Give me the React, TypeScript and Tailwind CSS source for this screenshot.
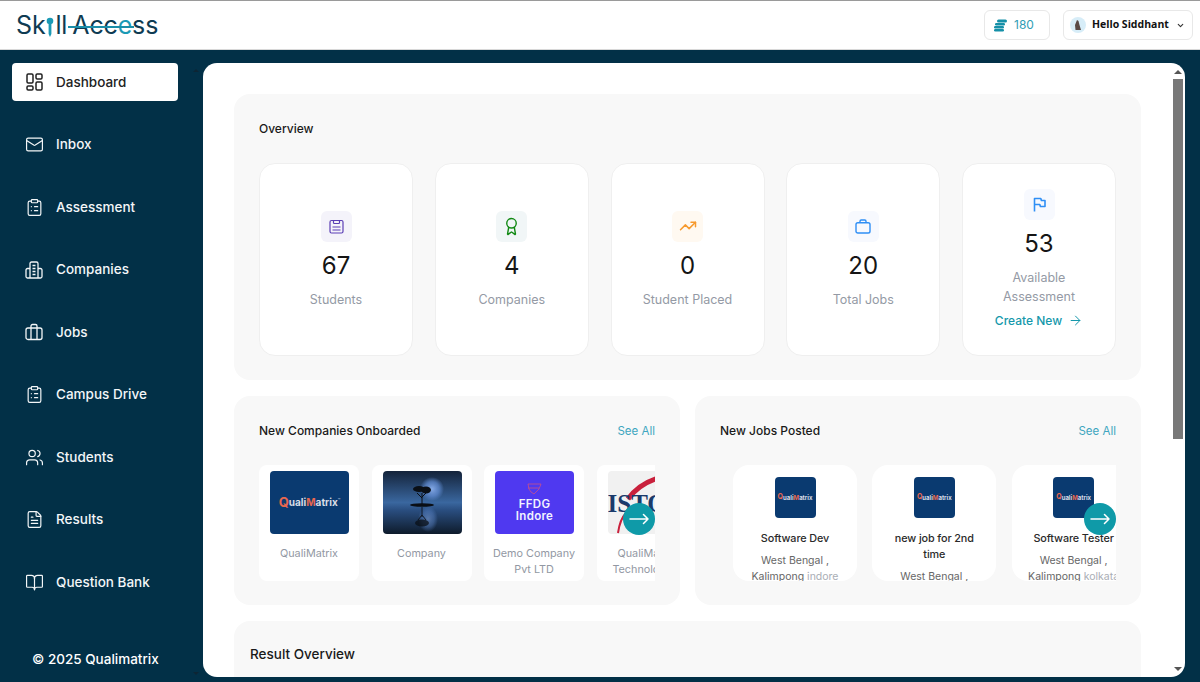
import { ArrowRight, Award, BookOpen, ChevronDown, ClipboardList, Mail, TrendingUp, Users, FileText } from "lucide-react";
import type { ReactNode } from "react";

const DashboardIcon = () => (
    <svg width="17" height="18" viewBox="0 0 17 18" fill="none" stroke="currentColor" strokeWidth="1.5">
        <rect x="1" y="1" width="6" height="9" rx="1.2" />
        <rect x="10" y="1" width="6" height="5" rx="1.2" />
        <rect x="1" y="13" width="6" height="4" rx="1.2" />
        <rect x="10" y="9" width="6" height="8" rx="1.2" />
    </svg>
);

const CompaniesIcon = () => (
    <svg width="18" height="18" viewBox="0 0 18 18" fill="none" stroke="currentColor" strokeWidth="1.3" strokeLinejoin="round">
        <path d="M5 17V2.5A1.5 1.5 0 0 1 6.5 1h5A1.5 1.5 0 0 1 13 2.5V17" />
        <path d="M5 7.5H2.5A1.5 1.5 0 0 0 1 9v6.5A1.5 1.5 0 0 0 2.5 17h13a1.5 1.5 0 0 0 1.5-1.5V9a1.5 1.5 0 0 0-1.5-1.5H13" />
        <path d="M7.5 4.5h3M7.5 7.5h3M7.5 10.5h3M7.5 13.5h3" />
    </svg>
);

const JobsIcon = () => (
    <svg width="18" height="18" viewBox="0 0 18 18" fill="none" stroke="currentColor" strokeWidth="1.3" strokeLinejoin="round">
        <rect x="1" y="5" width="16" height="11.5" rx="2" />
        <path d="M6 16.5V3a1.5 1.5 0 0 1 1.5-1.5h3A1.5 1.5 0 0 1 12 3v13.5" />
    </svg>
);

const StudentsClipIcon = () => (
    <svg width="15" height="15" viewBox="0 0 15 15" fill="none" stroke="#5b3fb5" strokeWidth="1.2">
        <rect x="1" y="1.5" width="13" height="12.5" rx="1.5" />
        <path d="M4.5 1.5v2.2a.8.8 0 0 0 .8.8h4.4a.8.8 0 0 0 .8-.8V1.5M3.5 8h8M3.5 11h8" />
    </svg>
);

const BriefcaseIcon = () => (
    <svg width="16" height="15" viewBox="0 0 16 15" fill="none" stroke="#2f8ff5" strokeWidth="1.4">
        <rect x="1" y="3.7" width="14" height="10.3" rx="1.8" />
        <path d="M5 3.7V2.2A1.2 1.2 0 0 1 6.2 1h3.6A1.2 1.2 0 0 1 11 2.2v1.5" />
    </svg>
);

const FlagIcon = () => (
    <svg width="13" height="15" viewBox="0 0 13 15" fill="none" stroke="#2f8ff5" strokeWidth="1.6" strokeLinejoin="round">
        <path d="M1.5 14.5V1.5h6.3l.6 2h3.6v6H7.4l-.6-2H1.5" />
    </svg>
);

const CoinsIcon = () => (
    <svg width="13" height="13" viewBox="0 0 13 13" fill="#1590a8">
        <rect x="3" y="0.5" width="10" height="3" rx="1.5" />
        <rect x="1" y="4" width="10" height="2.4" rx="1.2" />
        <rect x="0" y="7" width="10" height="2.4" rx="1.2" />
        <rect x="0" y="10" width="10" height="2.6" rx="1.3" />
    </svg>
);

const LongArrow = () => (
    <svg width="20" height="14" viewBox="0 0 20 14" fill="none" stroke="currentColor" strokeWidth="1.5" strokeLinecap="round" strokeLinejoin="round">
        <path d="M1 7h18M14.5 2.5 19 7l-4.5 4.5" />
    </svg>
);

const navItems: { label: string; icon: ReactNode }[] = [
    { label: "Dashboard", icon: <DashboardIcon /> },
    { label: "Inbox", icon: <Mail size={19} strokeWidth={1.5} /> },
    { label: "Assessment", icon: <ClipboardList size={19} strokeWidth={1.5} /> },
    { label: "Companies", icon: <CompaniesIcon /> },
    { label: "Jobs", icon: <JobsIcon /> },
    { label: "Campus Drive", icon: <ClipboardList size={19} strokeWidth={1.5} /> },
    { label: "Students", icon: <Users size={19} strokeWidth={1.5} /> },
    { label: "Results", icon: <FileText size={19} strokeWidth={1.5} /> },
    { label: "Question Bank", icon: <BookOpen size={19} strokeWidth={1.5} /> },
];

const Logo = () => (
    <div className="flex items-baseline text-[25px] leading-none tracking-[-0.15px] text-[#0e3b52]">
        <span>Sk</span>
        <svg width="8" height="21" viewBox="0 0 8 21" className="mx-[1px] self-end">
            <circle cx="4" cy="4" r="3.3" fill="#1b9ab5" />
            <path d="M2.6 7h2.8v10l-1.4 3-1.4-3z" fill="#1b9ab5" />
        </svg>
        <span>ll</span>
        <span className="relative ml-[5px]">
            Acc<span className="text-[#1b9ab5]">e</span>ss
            <span className="absolute left-[-4px] top-[13px] h-[2px] w-[66px] bg-[#1b8ea8]" />
        </span>
    </div>
);

const Header = () => (
    <header className="flex h-[50px] shrink-0 items-center justify-between border-t border-b border-t-[#9a9a9a] border-b-[#d8d8d8] bg-white pl-4 pr-[7px]">
        <Logo />
        <div className="flex items-center gap-[13px]">
            <div className="flex h-[30px] w-[66px] items-center gap-[7px] rounded-md border border-[#e8e8e8] pl-[9px] text-xs text-[#2f9db5]">
                <CoinsIcon />
                180
            </div>
            <div className="flex h-[30px] w-[130px] items-center whitespace-nowrap rounded-md border border-[#e8e8e8] pl-[6px] font-['Open_Sans',sans-serif] text-[10.5px] font-bold text-[#111]">
                <svg width="16" height="16" viewBox="0 0 16 16" className="mr-[6px] shrink-0">
                    <circle cx="8" cy="8" r="8" fill="#d7edf8" />
                    <path d="M5.5 13 5 8l2-5 1.5 1 1 4 1.5 5z" fill="#5a4a45" />
                </svg>
                Hello Siddhant
                <ChevronDown size={9} strokeWidth={3} className="ml-[7px] shrink-0 text-[#333]" />
            </div>
        </div>
    </header>
);

const Sidebar = () => (
    <aside className="relative flex w-[203px] shrink-0 flex-col justify-between pl-3 pt-[13px] pb-[13px] text-white">
        <nav className="flex w-[166px] flex-col gap-[24.5px]">
            {navItems.map((item, i) => (
                <div
                    key={item.label}
                    className={`flex h-[38px] items-center rounded pl-[13px] text-[13.5px] font-medium ${i === 0 ? "bg-white text-[#222]" : "text-[#f3f6f8]"}`}
                >
                    <span className={`flex w-[31px] shrink-0 items-center ${i === 0 ? "pl-[1px]" : ""}`}>{item.icon}</span>
                    {item.label}
                </div>
            ))}
        </nav>
        <div className="pl-5 text-[13.5px] font-medium">© 2025 Qualimatrix</div>
        <div className="absolute right-[4px] top-[19px] h-0 w-0 border-x-[3px] border-b-[3px] border-x-transparent border-b-[#0d2534]" />
        <div className="absolute bottom-[7px] right-[4px] h-0 w-0 border-x-[3px] border-t-[3px] border-x-transparent border-t-[#0d2534]" />
    </aside>
);

const StatCard = ({ tile, icon, value, label, extra }: { tile: string; icon: ReactNode; value: string; label: ReactNode; extra?: ReactNode }) => (
    <div className="flex h-[193px] flex-col items-center justify-center rounded-2xl border border-[#efefef] bg-white text-center">
        <div className={`flex h-[31px] w-[31px] items-center justify-center rounded-md ${tile}`}>{icon}</div>
        <div className="mt-[6px] text-2xl leading-[36px] text-[#151515]">{value}</div>
        <div className="mt-[6px] text-[12.5px] leading-[19px] text-[#949aa5]">{label}</div>
        {extra}
    </div>
);

const CarouselArrow = () => (
    <div className="absolute right-0 top-[38px] flex h-8 w-8 items-center justify-center rounded-full bg-[#0f9aa8] text-white">
        <LongArrow />
    </div>
);

const QualiLogo = ({ big }: { big?: boolean }) => (
    <div className={`flex h-full w-full items-center justify-center rounded bg-[#0a3a70] font-bold ${big ? "text-[10px]" : "text-[6px]"}`}>
        <span className={`text-[#e8674f] ${big ? "text-[13px]" : "text-[7px]"}`}>Q</span>
        <span className="text-[#d8dde6]">uali</span>
        <span className="text-[#e8674f]">M</span>
        <span className="text-[#d8dde6]">atrix</span>
        {big && <span className="mb-[4px] text-[4px] text-[#d8dde6]">™</span>}
    </div>
);

const NightImage = () => (
    <svg viewBox="0 0 79 63" className="h-full w-full rounded">
        <defs>
            <linearGradient id="sky" x1="0" y1="0" x2="0" y2="1">
                <stop offset="0" stopColor="#14233a" />
                <stop offset="0.5" stopColor="#3a679f" />
                <stop offset="0.62" stopColor="#2a4e80" />
                <stop offset="1" stopColor="#0e1b2b" />
            </linearGradient>
            <radialGradient id="moon" cx="0.5" cy="0.5" r="0.5">
                <stop offset="0" stopColor="#86aae6" />
                <stop offset="0.6" stopColor="#5f8ad0" stopOpacity="0.75" />
                <stop offset="1" stopColor="#5f8ad0" stopOpacity="0" />
            </radialGradient>
        </defs>
        <rect width="79" height="63" fill="url(#sky)" />
        <circle cx="49" cy="18" r="12" fill="url(#moon)" />
        <ellipse cx="45" cy="48" rx="10" ry="13" fill="url(#moon)" opacity="0.55" />
        <ellipse cx="39" cy="34" rx="12" ry="1.8" fill="#0a0f16" />
        <path d="M39 33V22M39 27l-5-5M39 26l5-5" stroke="#0a0f16" strokeWidth="1" />
        <ellipse cx="36" cy="18" rx="6" ry="3" fill="#0a0f16" />
        <ellipse cx="43" cy="19" rx="5" ry="3.5" fill="#0a0f16" />
        <path d="M39 36v10M39 44l-4 5M39 44l4 5" stroke="#0a0f16" strokeWidth="1" opacity="0.85" />
        <ellipse cx="39" cy="52" rx="7" ry="3.5" fill="#0a0f16" opacity="0.75" />
    </svg>
);

const FfdgImage = () => (
    <div className="flex h-full w-full flex-col items-center justify-center rounded bg-[#4f39f0] text-[11.5px] font-semibold leading-[12px] tracking-[0.3px] text-[#f2f2ff]">
        <svg width="15" height="12" viewBox="0 0 15 12" fill="none" stroke="#d8547a" strokeWidth="0.7" className="mb-[3px]">
            <path d="M1 1h13l-2 5-5 5-3-2-2-3zM1 5h11" />
        </svg>
        <span>FFDG</span>
        <span>Indore</span>
    </div>
);

const IstoImage = () => (
    <div className="relative h-full w-full overflow-hidden rounded bg-[#f1f1f1]">
        <svg viewBox="0 0 79 63" className="h-full w-full">
            <path d="M20 28Q34 9 60 5" stroke="#c9203c" strokeWidth="5" fill="none" />
            <path d="M10 62Q12 48 18 42" stroke="#c9203c" strokeWidth="2" fill="none" />
        </svg>
        <span className="absolute left-0 top-[20px] font-['Liberation_Serif',serif] text-[25px] font-bold leading-none text-[#1a3a6b]">ISTO</span>
    </div>
);

const companies: { name: ReactNode; image: ReactNode }[] = [
    { name: "QualiMatrix", image: <QualiLogo big /> },
    { name: "Company", image: <NightImage /> },
    { name: <>Demo Company<br />Pvt LTD</>, image: <FfdgImage /> },
    { name: <>QualiMatrix<br />Technologies</>, image: <IstoImage /> },
];

const jobs = [
    { title: "Software Dev", place: "West Bengal ,", place2: "Kalimpong", city: "indore" },
    { title: "new job for 2nd time", place: "West Bengal ,", place2: "Kalimpong", city: "indore" },
    { title: "Software Tester", place: "West Bengal ,", place2: "Kalimpong", city: "kolkata" },
];

const PanelHead = ({ title }: { title: string }) => (
    <div className="mb-6 flex h-5 items-center justify-between text-xs font-medium leading-5 text-[#1a1a1a]">
        {title}
        <span className="text-[11.5px] font-normal text-[#3ea6c0]">See All</span>
    </div>
);

const Scrollbar = () => (
    <div className="flex w-3 shrink-0 flex-col items-start pb-[4px] pt-[4px]">
        <div className="flex h-[9px] w-[10px] items-center justify-center">
            <div className="h-0 w-0 border-x-[4px] border-b-[4px] border-x-transparent border-b-[#555]" />
        </div>
        <div className="mt-[3px] h-[360px] w-[10px] bg-[#787878]" />
        <div className="mt-auto flex h-[9px] w-[10px] items-center justify-center">
            <div className="h-0 w-0 border-x-[4px] border-t-[4px] border-x-transparent border-t-[#555]" />
        </div>
    </div>
);

export default function App() {
    return (
        <div className="flex h-screen flex-col overflow-hidden bg-[#023047] font-[Inter,sans-serif]">
            <Header />
            <div className="flex min-h-0 flex-1">
                <Sidebar />
                <main className="mb-[5px] mr-[15px] mt-[13px] flex min-w-0 flex-1 overflow-hidden rounded-[14px] bg-white">
                    <div className="min-w-0 flex-1 overflow-hidden pl-[31px] pr-[32px] pt-[31px]">
                        <section className="rounded-2xl bg-[#f8f8f8] px-[25px] pb-6 pt-[25px]">
                            <div className="mb-6 h-5 text-xs font-medium leading-5 text-[#1a1a1a]">Overview</div>
                            <div className="grid grid-cols-5 gap-[21.75px]">
                                <StatCard tile="bg-[#f4f3fa]" icon={<StudentsClipIcon />} value="67" label="Students" />
                                <StatCard tile="bg-[#f1f6f7]" icon={<Award size={19} strokeWidth={1.8} className="text-[#138a15]" />} value="4" label="Companies" />
                                <StatCard tile="bg-[#fff9f1]" icon={<TrendingUp size={18} strokeWidth={2} className="text-[#f79a2e]" />} value="0" label="Student Placed" />
                                <StatCard tile="bg-[#f7f9fe]" icon={<BriefcaseIcon />} value="20" label="Total Jobs" />
                                <StatCard
                                    tile="bg-[#f7f9fe]"
                                    icon={<FlagIcon />}
                                    value="53"
                                    label={<>Available<br />Assessment</>}
                                    extra={
                                        <div className="mt-[5px] flex items-center gap-[6px] text-xs font-medium leading-5 text-[#1598ab]">
                                            Create New <ArrowRight size={15} strokeWidth={1.6} />
                                        </div>
                                    }
                                />
                            </div>
                        </section>
                        <div className="mt-4 grid grid-cols-2 gap-[15px]">
                            <section className="rounded-2xl bg-[#f8f8f8] px-[25px] pb-6 pt-[25px]">
                                <PanelHead title="New Companies Onboarded" />
                                <div className="relative h-[116px] overflow-hidden">
                                    <div className="flex h-full w-[500px] gap-[12.5px]">
                                        {companies.map((c, i) => (
                                            <div key={i} className="w-[100px] shrink-0 overflow-hidden rounded-lg bg-white pt-[6px] text-center">
                                                <div className="mx-[11px] h-[63px] w-[79px]">{c.image}</div>
                                                <div className="mt-3 whitespace-nowrap text-[10.8px] leading-[16px] text-[#9298a3]">{c.name}</div>
                                            </div>
                                        ))}
                                    </div>
                                    <CarouselArrow />
                                </div>
                            </section>
                            <section className="rounded-2xl bg-[#f8f8f8] px-[25px] pb-6 pt-[25px]">
                                <PanelHead title="New Jobs Posted" />
                                <div className="relative h-[116px] overflow-hidden">
                                    <div className="flex h-full w-[500px] gap-[15.3px] pl-[13px]">
                                        {jobs.map((job) => (
                                            <div key={job.title} className="flex w-[124px] shrink-0 flex-col items-center overflow-hidden rounded-2xl bg-white pt-3 text-center">
                                                <div className="h-[41px] w-[41px] shrink-0"><QualiLogo /></div>
                                                <div className="mt-[13px] w-[100px] text-[10.8px] font-medium leading-[16px] tracking-[-0.1px] text-[#2a2a2a]">{job.title}</div>
                                                <div className="mt-[6px] w-[124px] px-1 text-[10.5px] leading-[16px] text-[#666]">
                                                    {job.place}<br />
                                                    <span className="whitespace-nowrap">{job.place2} <span className="text-[#a9adb5]">{job.city}</span></span>
                                                </div>
                                            </div>
                                        ))}
                                    </div>
                                    <CarouselArrow />
                                </div>
                            </section>
                        </div>
                        <section className="mt-4 h-[300px] rounded-2xl bg-[#f8f8f8] px-4 pt-[23px]">
                            <div className="text-[13.5px] font-medium leading-5 text-[#1a1a1a]">Result Overview</div>
                        </section>
                    </div>
                    <Scrollbar />
                </main>
            </div>
        </div>
    );
}
